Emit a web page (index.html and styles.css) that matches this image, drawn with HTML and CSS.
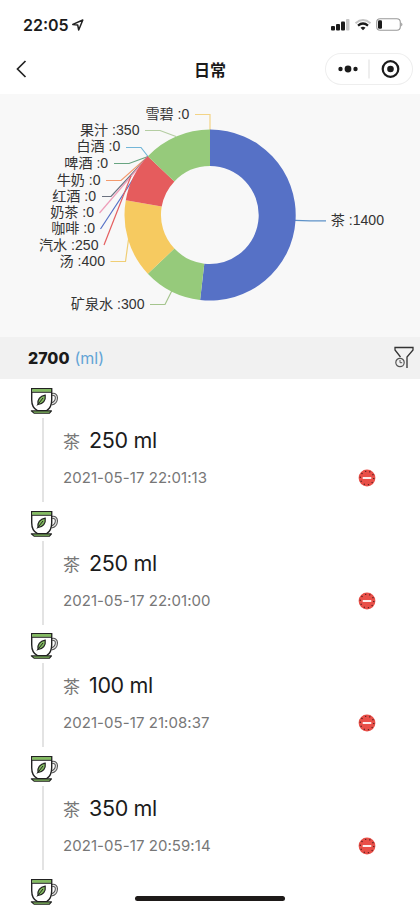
FILE: index.html
```
<!DOCTYPE html>
<html lang="zh-CN">
<head>
<meta charset="utf-8">
<title>日常</title>
<link rel="stylesheet" href="styles.css">
</head>
<body>
<svg class="symbols" aria-hidden="true">
  <symbol id="cup" viewBox="0 0 28 28">
    <path d="M22 7.500c6-1.500 6 8-.8 9.500" fill="none" stroke="#555" stroke-width="3.200"/>
    <path d="M22 7.500c6-1.500 6 8-.8 9.500" fill="none" stroke="#e4e4e4" stroke-width="1.100"/>
    <path d="M1.700 1.700h20v11c0 5-2 9-5 11H7.500c-4-2-5.800-7-5.800-11z" fill="#fff" stroke="#222" stroke-width="1.400"/>
    <path d="M2.300 2.100h18.800v2.800H2.300z" fill="#83bd60"/>
    <path d="M1.500 5.300h20.200" stroke="#222" stroke-width="1"/>
    <path d="M8 17.500c-1-5 2-8.500 7.200-9.300.8 5.200-2.200 9-7.200 9.300z" fill="#83bd60" stroke="#222" stroke-width="1.200"/>
    <path d="M7 18.500l6-7.500" stroke="#222"/>
    <path d="M1.300 23.900h20.200l-2 2.300H4z" fill="#83bd60" stroke="#222" stroke-width="1.100" stroke-linejoin="round"/>
  </symbol>
  <symbol id="remove" viewBox="0 0 18 18">
    <circle cx="9" cy="9" r="8.400" fill="#e94f48"/>
    <circle cx="9" cy="9" r="6.800" fill="none" stroke="#4a1f1e" stroke-width="1.200" stroke-dasharray="1.200 3.070"/>
    <path d="M4.700 9h8.600" stroke="#fff" stroke-width="1.800"/>
  </symbol>
</svg>
<div class="phone">
  <header class="status">
    <span class="time">22:05</span>
    <svg class="location" width="12" height="12" viewBox="0 0 12 12"><path d="M.8 5.400L10.800 1 6.700 11 5.700 6z" fill="none" stroke="#222" stroke-width="1.500" stroke-linejoin="round"/></svg>
    <svg class="signals" width="76" height="16" viewBox="0 0 76 16">
      <g fill="#1b1b1b"><rect x="1" y="9" width="4" height="4.500" rx="1"/><rect x="6" y="7" width="4" height="6.500" rx="1"/><rect x="11" y="4.500" width="4" height="9" rx="1"/></g>
      <rect x="16" y="2" width="3.500" height="11.500" rx="1" fill="#c5c5c5"/>
      <path d="M25.500 6.200q7.500-6.400 15 0" fill="none" stroke="#c5c5c5" stroke-width="2"/>
      <path d="M28 8.600q5-4.200 10 0" fill="none" stroke="#1b1b1b" stroke-width="2.200"/>
      <path d="M30.500 10.700q2.500-2 5 0L33 13.300z" fill="#1b1b1b"/>
      <rect x="46.700" y="1.700" width="23.600" height="11.600" rx="3.500" fill="none" stroke="#999" stroke-width="1.100"/>
      <rect x="48" y="3.300" width="4" height="8.500" rx="1.300" fill="#1b1b1b"/>
      <path d="M71.300 5.500q2.200 2 0 4z" fill="#888"/>
    </svg>
  </header>
  <nav class="nav">
    <svg class="back" width="12" height="18" viewBox="0 0 12 18"><path d="M9.500 1L1.500 9l8 8" fill="none" stroke="#222" stroke-width="1.700"/></svg>
    <h1>日常</h1>
    <div class="capsule">
      <svg width="88" height="32" viewBox="0 0 88 32"><g fill="#1b1b1b"><circle cx="15.500" cy="16" r="2.200"/><circle cx="23" cy="16" r="3.400"/><circle cx="30.500" cy="16" r="2.200"/><circle cx="65.500" cy="16" r="3.300"/></g><path d="M44 6.500v19" stroke="#ddd"/><circle cx="65.500" cy="16" r="7.800" fill="none" stroke="#1b1b1b" stroke-width="2.200"/></svg>
    </div>
  </nav>
  <section class="chart">
    <svg width="420" height="243" viewBox="0 94 420 243">
      <g class="leaders">
        <path stroke="#f3d487" d="M195 114.500h15V130"/>
        <path stroke="#b4cda2" d="M145 130.500h15l16 6"/>
        <path stroke="#73b6d8" d="M126 147.500h15l7 9"/>
        <path stroke="#68a581" d="M114 163.500h15l19-7"/>
        <path stroke="#f39a6d" d="M106 180.500h15l27-24"/>
        <path stroke="#6b7280" d="M102 196.500h9l37-40"/>
        <path stroke="#ee9eb9" d="M99.500 213L148 156.500"/>
        <path stroke="#5470c6" d="M100.500 229L148 156.500"/>
        <path stroke="#e55f60" d="M104 245l27-69"/>
        <path stroke="#f0ce75" d="M110.500 261.500h15l3-22"/>
        <path stroke="#a5c58e" d="M150 304.500h15l7-14"/>
        <path stroke="#5d91c8" d="M295 220.300l15 .5h16"/>
      </g>
      <path fill="#5671c6" d="M210 129.500A85.500 85.500 0 1 1 200.100 299.900L204.300 263.700A49 49 0 1 0 210 166z"/>
      <path fill="#96ca7b" d="M200.100 299.900A85.500 85.500 0 0 1 147.800 273.700L174.400 248.600A49 49 0 0 0 204.300 263.700z"/>
      <path fill="#f6ca60" d="M147.800 273.700A85.500 85.500 0 0 1 125.800 200.200L161.700 206.500A49 49 0 0 0 174.400 248.600z"/>
      <path fill="#e55c5d" d="M125.800 200.200A85.500 85.500 0 0 1 147.800 156.300L174.400 181.400A49 49 0 0 0 161.700 206.500z"/>
      <path fill="#96ca7b" d="M147.800 156.300A85.500 85.500 0 0 1 210 129.500V166A49 49 0 0 0 174.400 181.400z"/>
      <g class="labels">
        <text x="189.300" y="119">雪碧 :0</text>
        <text x="139.500" y="135">果汁 :350</text>
        <text x="120.300" y="151">白酒 :0</text>
        <text x="108.200" y="168">啤酒 :0</text>
        <text x="100.500" y="184.500">牛奶 :0</text>
        <text x="96" y="200.500">红酒 :0</text>
        <text x="94" y="216.500">奶茶 :0</text>
        <text x="95" y="233">咖啡 :0</text>
        <text x="98.500" y="249.500">汽水 :250</text>
        <text x="105" y="266">汤 :400</text>
        <text x="144.500" y="309">矿泉水 :300</text>
        <text x="384" y="225">茶 :1400</text>
      </g>
    </svg>
  </section>
  <section class="summary">
    <strong>2700</strong><span class="unit">(ml)</span>
    <svg class="filter" width="20" height="24" viewBox="0 0 20 24"><path d="M6.500 11L1 4V1.500h18V4l-6 7v11" fill="none" stroke="#333" stroke-width="1.300"/><circle cx="6" cy="16.500" r="4.200" fill="#f1f1f1" stroke="#555" stroke-width="1.200"/><path d="M6 14v2.700h2.200" fill="none" stroke="#555"/></svg>
  </section>
  <main class="list">
    <article class="item">
      <div class="rail"><svg class="cup"><use href="#cup"/></svg><i></i></div>
      <div class="info"><p class="title"><span>茶</span><b>250 ml</b></p><time>2021-05-17 22:01:13</time></div>
      <svg class="remove"><use href="#remove"/></svg>
    </article>
    <article class="item">
      <div class="rail"><svg class="cup"><use href="#cup"/></svg><i></i></div>
      <div class="info"><p class="title"><span>茶</span><b>250 ml</b></p><time>2021-05-17 22:01:00</time></div>
      <svg class="remove"><use href="#remove"/></svg>
    </article>
    <article class="item">
      <div class="rail"><svg class="cup"><use href="#cup"/></svg><i></i></div>
      <div class="info"><p class="title"><span>茶</span><b>100 ml</b></p><time>2021-05-17 21:08:37</time></div>
      <svg class="remove"><use href="#remove"/></svg>
    </article>
    <article class="item">
      <div class="rail"><svg class="cup"><use href="#cup"/></svg><i></i></div>
      <div class="info"><p class="title"><span>茶</span><b>350 ml</b></p><time>2021-05-17 20:59:14</time></div>
      <svg class="remove"><use href="#remove"/></svg>
    </article>
    <article class="item">
      <div class="rail"><svg class="cup"><use href="#cup"/></svg></div>
    </article>
  </main>
  <div class="home-bar"></div>
</div>
</body>
</html>
```
FILE: styles.css
```
* { box-sizing: border-box; }
body { margin: 0; background: #fff; color: #1b1b1b; font-family: Inter, "Noto Sans CJK SC", sans-serif; }
h1, p { margin: 0; }
svg { display: block; flex: none; }
.symbols { position: absolute; width: 0; height: 0; }
.phone { position: relative; width: 420px; height: 909px; overflow: hidden; }
.status { display: flex; align-items: center; height: 50px; padding: 0 16px 0 23px; }
.time { font-size: 16px; font-weight: 600; line-height: 20px; }
.location { margin-left: 3px; }
.signals { margin-left: auto; margin-right: -2px; }
.nav { display: grid; grid-template-columns: 104px 1fr 104px; align-items: center; height: 44px; padding: 0 7px 6px 0; }
.back { margin-left: 16px; }
.nav h1 { padding-left: 7px; text-align: center; font: 600 16px/22px "Noto Sans CJK SC", sans-serif; }
.capsule { justify-self: end; width: 88px; height: 32px; border-radius: 16px; box-shadow: inset 0 0 0 1px #eee; }
.chart { height: 243px; background: #f8f8f8; }
.leaders { fill: none; stroke-width: 1.2; }
.labels { fill: #333; font: 14.1px "Liberation Sans", "Noto Sans CJK SC", sans-serif; text-anchor: end; }
.summary { display: flex; align-items: center; height: 42px; padding: 0 6px 0 28px; background: #f1f1f1; }
.summary strong { font-size: 16px; font-weight: 800; }
.unit { margin-left: 5px; color: #62a4d6; font-size: 16px; }
.filter { margin-left: auto; }
.list { padding-top: 8px; }
.item { display: grid; grid-template-columns: 63px 1fr 62px; height: 122.7px; }
.rail { display: flex; flex-direction: column; padding-left: 30px; }
.cup { width: 28px; height: 28px; }
.rail i { width: 2px; height: 84px; margin: 3px 0 0 12px; background: #e3e3e3; }
.info { padding-top: 39px; }
.title { display: flex; align-items: baseline; height: 30px; line-height: 28px; }
.title span { width: 26px; color: #777; font-size: 17px; }
.title b { font-size: 21.5px; font-weight: 400; letter-spacing: -.35px; }
.info time { display: block; margin-top: 12px; color: #777; font-size: 15px; line-height: 20px; letter-spacing: .06px; }
.remove { width: 18px; height: 18px; margin-top: 82px; }
.home-bar { position: absolute; left: 135px; bottom: 8px; width: 150px; height: 5px; border-radius: 3px; background: #1e1a19; }
```
